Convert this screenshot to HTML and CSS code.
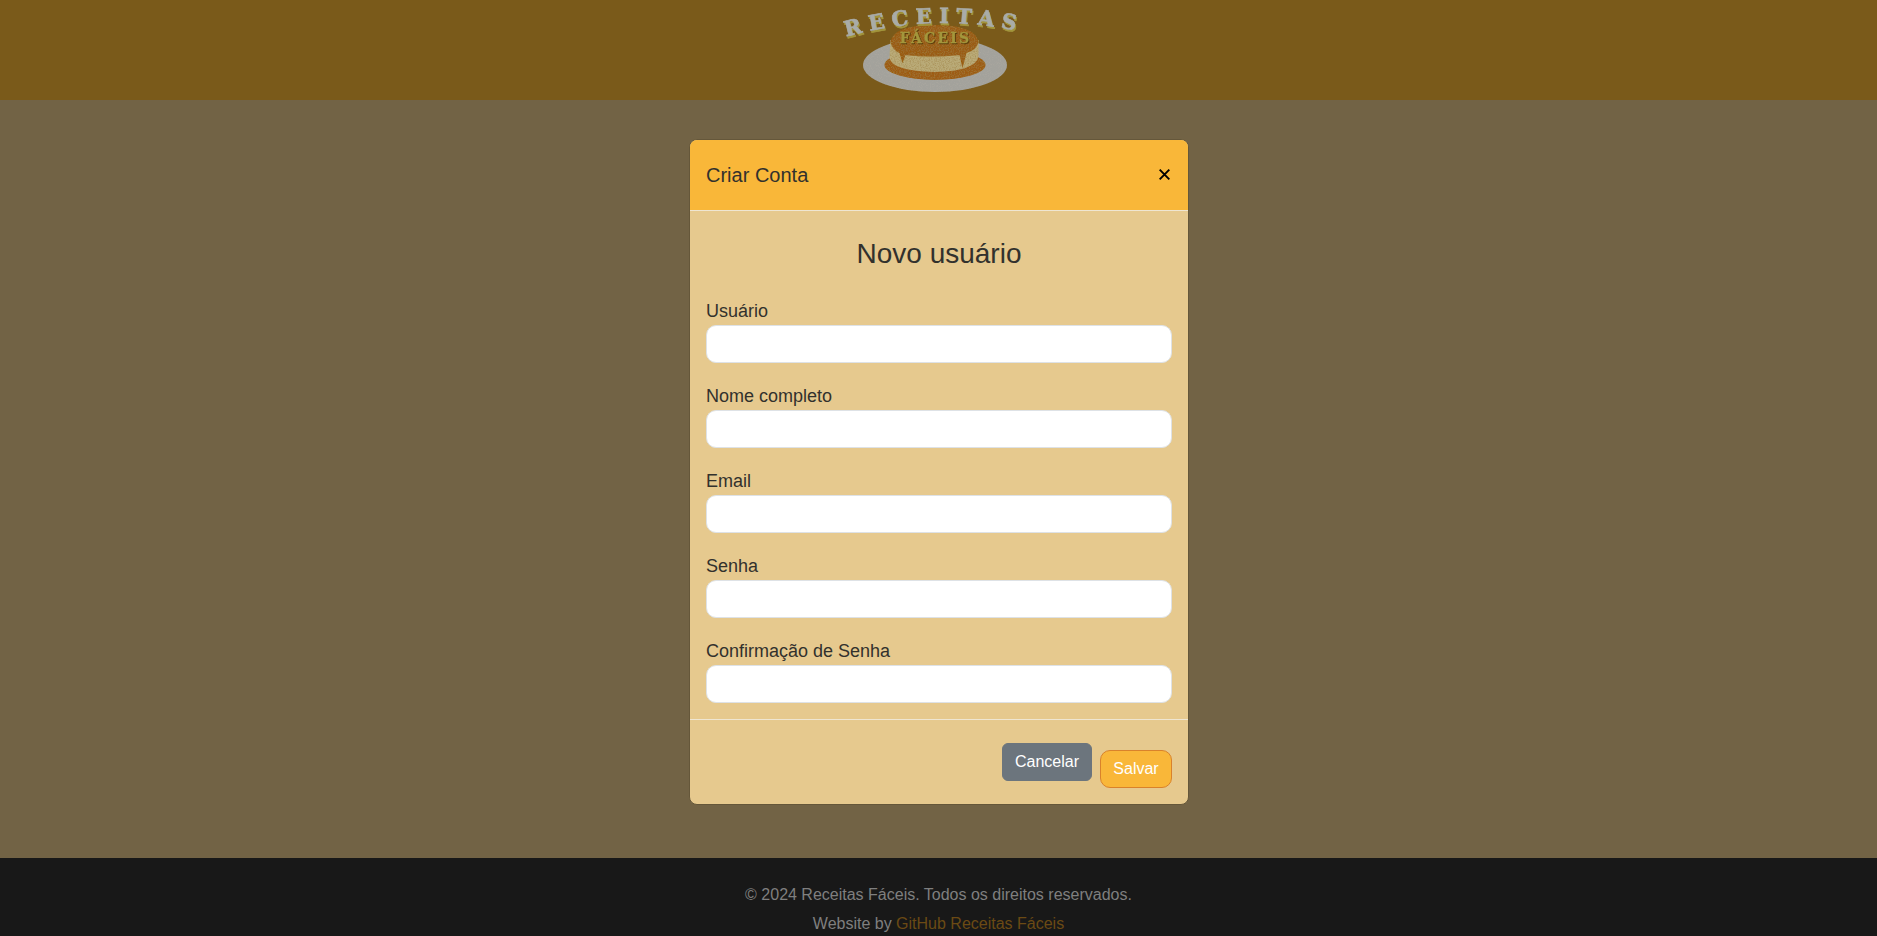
FILE: index.html
```html
<!DOCTYPE html>
<html lang="pt-BR">
<head>
<meta charset="utf-8">
<title>Receitas Fáceis</title>
<link rel="stylesheet" href="styles.css">
</head>
<body>
<div class="page">
  <header class="topbar">
    <svg class="logo" viewBox="838.5 0 200 100" width="200" height="100" aria-label="Receitas Fáceis">
      <defs>
        <filter id="grain" x="0" y="0" width="100%" height="100%">
          <feTurbulence type="fractalNoise" baseFrequency="0.8" numOctaves="2" seed="4" result="n"/>
          <feColorMatrix in="n" type="matrix" values="0 0 0 0 0.35  0 0 0 0 0.22  0 0 0 0 0.05  1.7 0 0 0 -0.7" result="m"/>
          <feComposite in="m" in2="SourceAlpha" operator="in" result="d"/>
          <feMerge><feMergeNode in="SourceGraphic"/><feMergeNode in="d"/></feMerge>
        </filter>
        <filter id="plate-grain" x="0" y="0" width="100%" height="100%">
          <feTurbulence type="fractalNoise" baseFrequency="1.1" numOctaves="1" seed="9" result="n"/>
          <feColorMatrix in="n" type="matrix" values="0 0 0 0 0.45  0 0 0 0 0.42  0 0 0 0 0.36  1.4 0 0 0 -0.65" result="m"/>
          <feComposite in="m" in2="SourceAlpha" operator="in" result="d"/>
          <feMerge><feMergeNode in="SourceGraphic"/><feMergeNode in="d"/></feMerge>
        </filter>
        <path id="arc" d="M841 38 Q935 11 1026 33"/>
      </defs>
      <ellipse cx="934.5" cy="65" rx="72" ry="27" fill="#a3a29c" filter="url(#plate-grain)"/>
      <ellipse cx="934.5" cy="65" rx="50.5" ry="15" fill="#9d5c12" filter="url(#grain)"/>
      <path d="M890 40 L889 58 Q892 71 934 72 Q976 71 978 56 L978 40 Z" fill="#baab78" filter="url(#grain)"/>
      <path d="M890 42 Q893 25 934 25 Q975 25 978 42 Q976 50 966 53 L962 68 L959 55 Q930 58 905 55 L902 63 L899 53 Q892 50 890 42 Z" fill="#9a5b12" filter="url(#grain)"/>
      <text class="logo-big"><textPath href="#arc" startOffset="50%" text-anchor="middle">RECEITAS</textPath></text>
      <text class="logo-small" x="935" y="43" text-anchor="middle">FÁCEIS</text>
    </svg>
  </header>
  <main class="content"></main>
  <footer class="footer">
    <p class="footer-line">© 2024 Receitas Fáceis. Todos os direitos reservados.</p>
    <p class="footer-line">Website by <a class="footer-link" href="#">GitHub Receitas Fáceis</a></p>
  </footer>

  <div class="modal" role="dialog">
    <div class="modal-header">
      <h5 class="modal-title">Criar Conta</h5>
      <svg class="close" viewBox="0 0 16 16" width="11" height="11"><path d="M1 1 L15 15 M15 1 L1 15" stroke="#000" stroke-width="2.8" fill="none"/></svg>
    </div>
    <form class="modal-body">
      <h3 class="form-title">Novo usuário</h3>
      <div class="field"><label class="label">Usuário</label><input class="input" type="text"></div>
      <div class="field"><label class="label">Nome completo</label><input class="input" type="text"></div>
      <div class="field"><label class="label">Email</label><input class="input" type="email"></div>
      <div class="field"><label class="label">Senha</label><input class="input" type="password"></div>
      <div class="field"><label class="label">Confirmação de Senha</label><input class="input" type="password"></div>
    </form>
    <div class="modal-footer">
      <button class="btn btn-cancel" type="button">Cancelar</button>
      <button class="btn btn-save" type="button">Salvar</button>
    </div>
  </div>
</div>
</body>
</html>
```
FILE: styles.css
```css
* { box-sizing: border-box; }
html, body { margin: 0; height: 100%; overflow: hidden; }
body { font-family: "Liberation Sans", Arial, sans-serif; font-size: 16px; line-height: 1.5; color: #32312d; }
.page { position: relative; height: 936px; display: flex; flex-direction: column; overflow: hidden; }
.topbar { height: 100px; flex: none; background: #7a5a1a; display: flex; justify-content: center; }
.logo { display: block; }
.logo-big { font-family: "DejaVu Serif", serif; font-weight: 700; font-size: 21px; letter-spacing: 7px; fill: #a9aca8; stroke: #a9aca8; stroke-width: 0.6; filter: drop-shadow(1px 2px 0 #a3963c); }
.logo-small { font-family: "DejaVu Serif", serif; font-weight: 700; font-size: 14px; letter-spacing: 2.2px; fill: #a3963c; stroke: #a3963c; stroke-width: 0.3; filter: drop-shadow(1px 1px 0 #5d3f0c); }
.content { flex: 1; background: #726345; }
.footer { height: 78px; flex: none; background: #181818; color: #7f7f7f; text-align: center; padding-top: 25px; }
.footer-line { margin: 0 0 5px; height: 24px; line-height: 24px; }
.footer-link { color: #6b4a14; text-decoration: none; }

.modal { position: absolute; left: 689px; top: 139px; width: 500px; height: 666px; background: #e6c98e; border: 1px solid #65573a; border-radius: 8px; display: flex; flex-direction: column; overflow: hidden; }
.modal-header { height: 71px; flex: none; background: #f9b739; border-bottom: 1px solid #efe6d2; display: flex; align-items: center; justify-content: space-between; padding: 0 18px 0 16px; }
.modal-title { margin: 0; font-size: 20px; font-weight: 400; line-height: 30px; }
.close { display: block; margin-bottom: 2px; }
.modal-body { flex: 1; padding: 16px 16px 0; }
.form-title { margin: 0 0 28px; font-size: 28px; font-weight: 400; line-height: 34px; text-align: center; padding-top: 10px; height: 44px; }
.field { margin-bottom: 21px; }
.field:last-child { margin-bottom: 0; }
.label { display: block; height: 24px; line-height: 24px; margin-bottom: 2px; font-size: 18px; }
.input { display: block; width: 100%; height: 38px; background: #fff; border: 1px solid #dee2e6; border-radius: 10px; outline: 0; padding: 6px 12px; font: inherit; }
.modal-footer { height: 85px; flex: none; border-top: 1px solid #efe6d2; display: flex; justify-content: flex-end; align-items: flex-start; gap: 8px; padding: 23px 16px 0; }
.btn { height: 38px; font: inherit; color: #fff; border-radius: 6px; padding: 0; cursor: pointer; }
.btn-cancel { width: 90px; background: #6c757d; border: 1px solid #6c757d; }
.btn-save { width: 72px; margin-top: 7px; background: #f9b739; border: 1px solid #d9822b; border-radius: 10px; }
```
